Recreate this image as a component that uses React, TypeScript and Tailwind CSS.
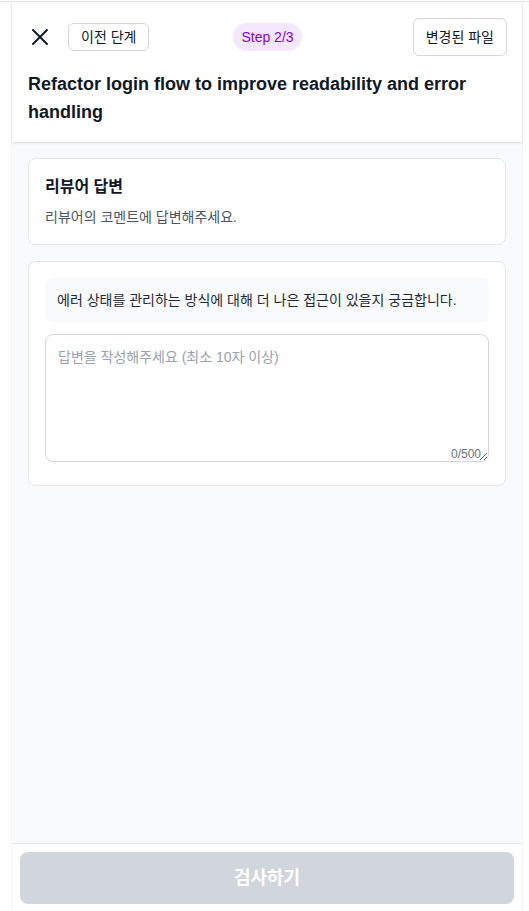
import React from 'react';

const FONT = "font-['Liberation_Sans','Noto_Sans_CJK_KR',sans-serif] [font-feature-settings:'palt']";

const CloseIcon: React.FC = () => (
  <svg viewBox="0 0 24 24" className="w-6 h-6" fill="none" stroke="#111827" strokeWidth={2} strokeLinecap="round">
    <line x1="5" y1="5" x2="19" y2="19" />
    <line x1="19" y1="5" x2="5" y2="19" />
  </svg>
);

export default function App() {
  const [answer, setAnswer] = React.useState('');

  return (
    <div className={`${FONT} min-h-screen flex flex-col bg-white text-gray-900`}>
      <div className="h-px mt-px bg-gray-200" />
      <div className="ml-[11px] w-[512px] flex-1 flex flex-col bg-gray-50 border-x border-gray-100">
        {/* header */}
        <header className="bg-white pl-4 pr-[15px] pt-4 pb-4 shadow-sm">
          <div className="grid grid-cols-3 items-center">
            <div className="flex items-center gap-4">
              <button className="flex items-center justify-center">
                <CloseIcon />
              </button>
              <button className="px-3 py-[3px] text-sm leading-5 border border-gray-300 rounded-md text-gray-900 whitespace-nowrap">
                이전 단계
              </button>
            </div>
            <div className="flex justify-center">
              <span className="px-2 py-1 text-sm leading-5 rounded-full bg-purple-100 text-purple-700 whitespace-nowrap">
                Step 2/3
              </span>
            </div>
            <div className="flex justify-end">
              <button className="px-3 py-2 text-sm leading-5 border border-gray-300 rounded-md text-gray-900 whitespace-nowrap">
                변경된 파일
              </button>
            </div>
          </div>
          <h1 className="mt-[14px] text-lg leading-7 font-bold text-gray-900">
            Refactor login flow to improve readability and error handling
          </h1>
        </header>

        {/* body */}
        <main className="flex-1 px-4 pt-4 flex flex-col gap-4">
          <section className="bg-white border border-gray-200 rounded-lg p-4 pb-[17px]">
            <h2 className="text-base leading-6 font-bold text-gray-900">리뷰어 답변</h2>
            <p className="mt-2 text-sm leading-5 text-gray-600">리뷰어의 코멘트에 답변해주세요.</p>
          </section>

          <section className="bg-white border border-gray-200 rounded-lg px-4 pt-4 pb-[23px]">
            <div className="bg-gray-50 rounded-lg px-3 py-3 text-sm leading-5 text-gray-800">
              에러 상태를 관리하는 방식에 대해 더 나은 접근이 있을지 궁금합니다.
            </div>
            <div className="relative mt-3">
              <textarea
                value={answer}
                onChange={e => setAnswer(e.target.value.slice(0, 500))}
                placeholder="답변을 작성해주세요 (최소 10자 이상)"
                className="block w-full h-32 px-3 py-3 text-sm leading-5 border border-gray-300 rounded-lg placeholder:text-gray-400 outline-none"
              />
              <span className="absolute right-2 bottom-0 text-xs leading-4 text-gray-500">
                {answer.length}/500
              </span>
            </div>
          </section>
        </main>

        {/* bottom bar */}
        <footer className="bg-white border-t border-gray-200 p-2 pb-[7px]">
          <button
            disabled
            className="w-full h-[52px] rounded-lg bg-gray-300 text-white text-lg font-bold"
          >
            검사하기
          </button>
        </footer>
      </div>
    </div>
  );
}
